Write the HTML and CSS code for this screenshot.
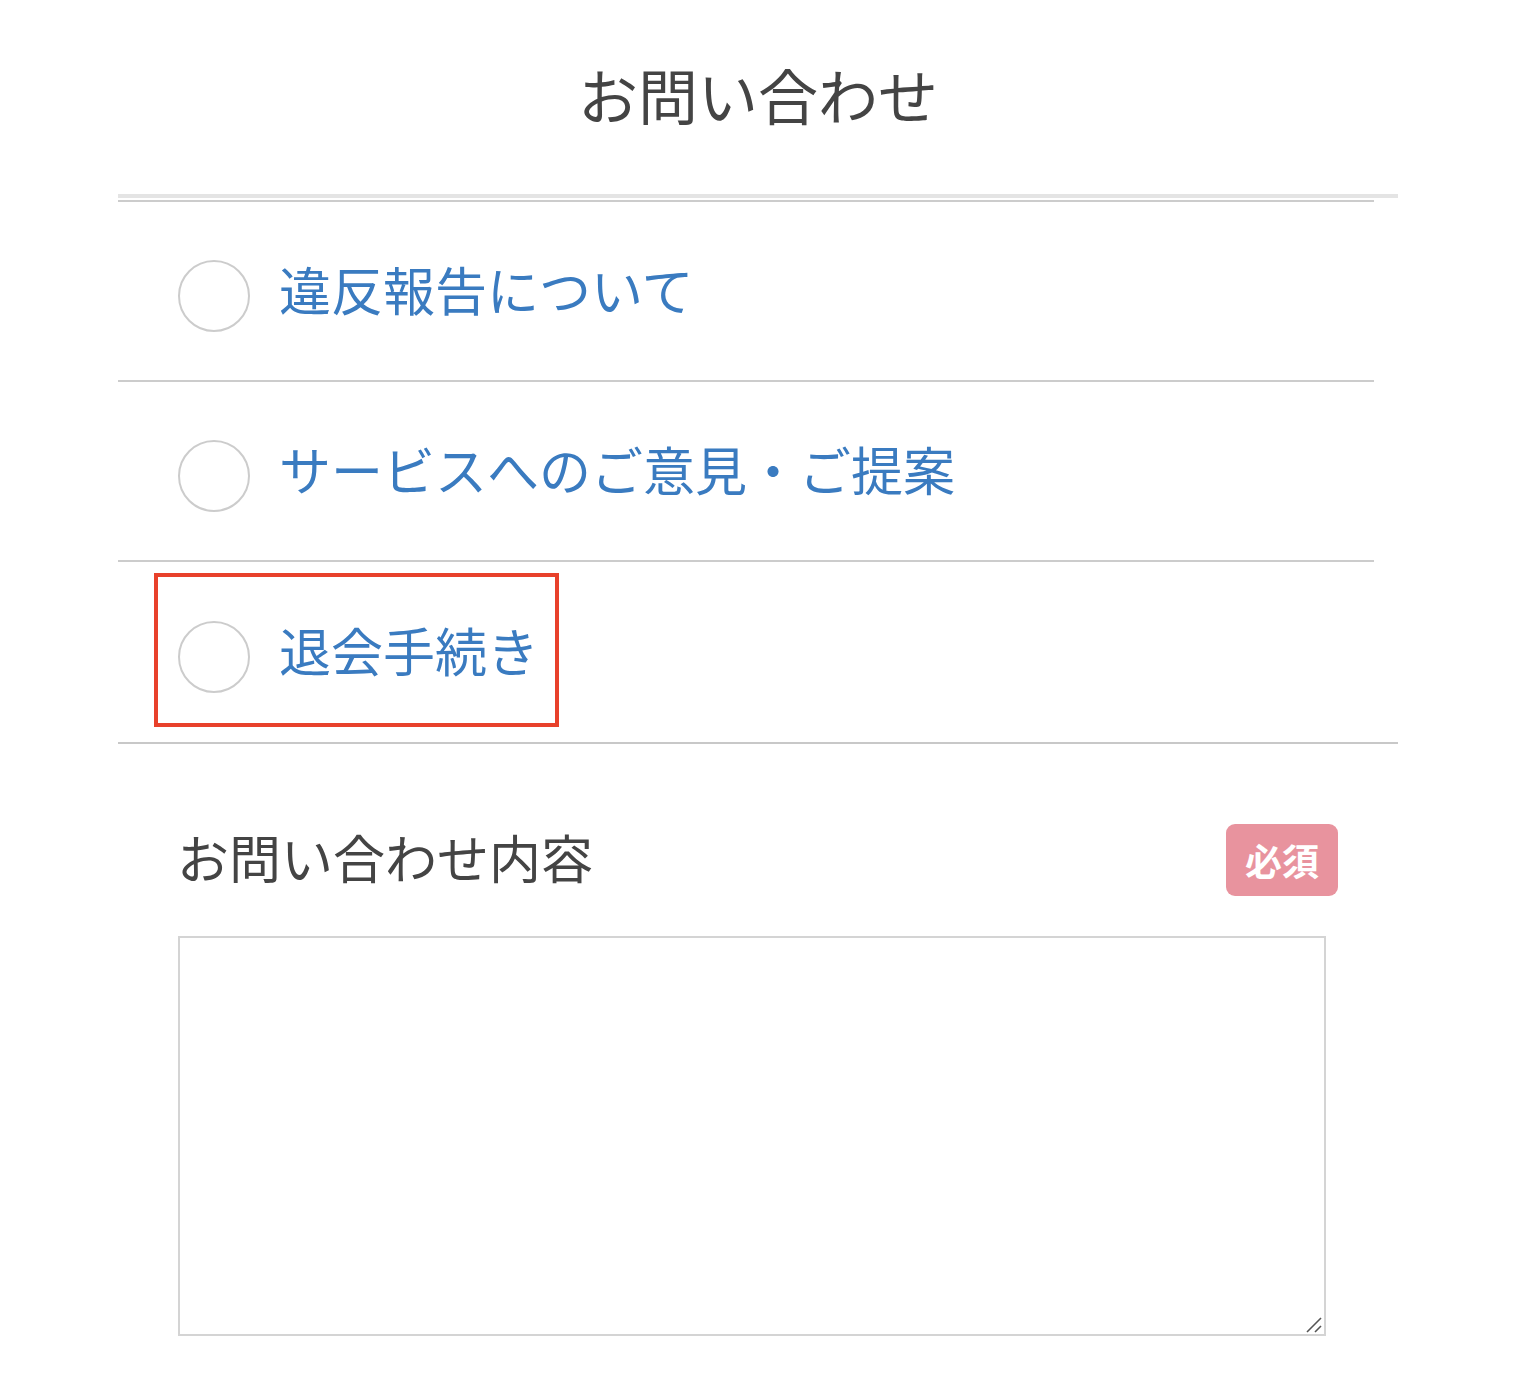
FILE: index.html
```html
<!DOCTYPE html>
<html lang="ja">
<head>
<meta charset="utf-8">
<title>お問い合わせ</title>
<link rel="stylesheet" href="styles.css">
</head>
<body>
<div class="page">
  <h1 class="title">お問い合わせ</h1>
  <form class="form">
    <ul class="choices">
      <li class="choice"><span class="radio"></span><span class="choice-label">違反報告について</span></li>
      <li class="choice"><span class="radio"></span><span class="choice-label">サービスへのご意見・ご提案</span></li>
      <li class="choice choice-last"><span class="radio"></span><span class="choice-label">退会手続き</span><span class="highlight"></span></li>
    </ul>
    <div class="field">
      <div class="field-head">
        <span class="field-label">お問い合わせ内容</span>
        <span class="badge">必須</span>
      </div>
      <div class="textarea-wrap">
        <textarea class="textarea"></textarea>
        <svg class="grip" width="18" height="18" viewBox="0 0 18 18" aria-hidden="true">
          <line x1="2" y1="16" x2="16" y2="2" stroke="#555" stroke-width="1.6"/>
          <line x1="10" y1="16" x2="16" y2="10" stroke="#555" stroke-width="1.6"/>
        </svg>
      </div>
    </div>
  </form>
</div>
</body>
</html>
```
FILE: styles.css
```css
html, body {
  margin: 0;
  padding: 0;
  background: #ffffff;
}
body {
  font-family: "Noto Sans CJK JP", "Noto Sans", sans-serif;
  color: #444444;
}
.page {
  width: 1280px;
  margin-left: 118px;
}
.title {
  margin: 49px 0 55px;
  height: 90px;
  line-height: 90px;
  font-size: 60px;
  font-weight: 400;
  text-align: center;
  color: #444444;
}
.form {
  border-top: 4px solid #e4e4e4;
  padding-top: 2px;
}
.choices {
  list-style: none;
  margin: 0;
  padding: 0;
  border-bottom: 2px solid #c8c8c8;
}
.choice {
  position: relative;
  display: flex;
  align-items: center;
  height: 178px;
  margin-right: 24px;
  border-top: 2px solid #cccccc;
  padding-left: 60px;
}
.choice-last {
  height: 180px;
}
.radio {
  width: 68px;
  height: 68px;
  border: 2px solid #cccccc;
  border-radius: 50%;
  flex: none;
  margin-top: 10px;
}
.choice-label {
  margin-left: 29px;
  font-size: 52px;
  line-height: 1;
  color: #3a7bc0;
  margin-top: -4px;
}
.highlight {
  position: absolute;
  left: 36px;
  top: 11px;
  width: 397px;
  height: 146px;
  border: 4px solid #e8412b;
}
.field {
  padding: 80px 60px 40px 60px;
}
.field-head {
  display: flex;
  align-items: center;
  justify-content: space-between;
  height: 72px;
}
.field-label {
  font-size: 52px;
  line-height: 1;
  color: #444444;
  margin-left: -1px;
  margin-top: -6px;
}
.badge {
  width: 112px;
  height: 72px;
  border-radius: 9px;
  background: #e8939e;
  color: #ffffff;
  font-size: 37px;
  font-weight: 700;
  display: flex;
  align-items: center;
  justify-content: center;
}
.textarea-wrap {
  position: relative;
  margin-top: 40px;
  width: 1148px;
  height: 400px;
}
.textarea {
  display: block;
  width: 100%;
  height: 100%;
  box-sizing: border-box;
  border: 2px solid #d4d4d4;
  border-radius: 0;
  padding: 0;
  resize: none;
  font-family: inherit;
}
.grip {
  position: absolute;
  right: 3px;
  bottom: 2px;
}
```
